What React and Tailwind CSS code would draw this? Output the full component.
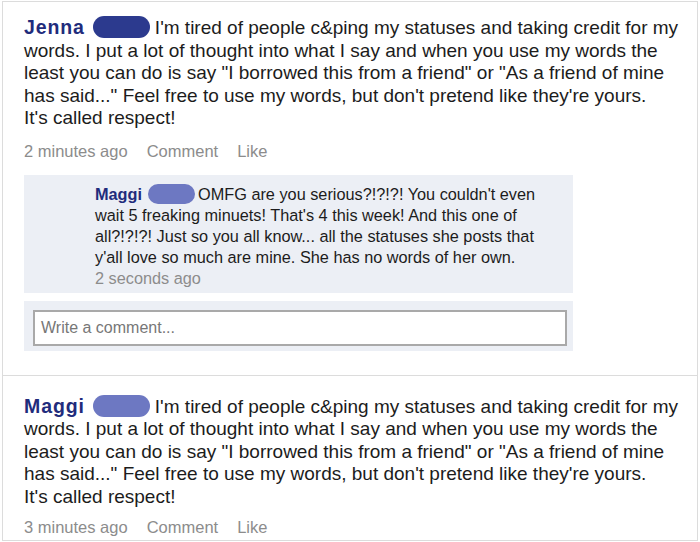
const FONT = { fontFamily: '"Liberation Sans", Arial, sans-serif' };

const STATUS =
  "I'm tired of people c&ping my statuses and taking credit for my words. I put a lot of thought into what I say and when you use my words the least you can do is say \"I borrowed this from a friend\" or \"As a friend of mine has said...\" Feel free to use my words, but don't pretend like they're yours.";

function Blob({ dark, small }) {
  return (
    <span
      className={
        "inline-block align-[-4px] rounded-full " +
        (small ? "w-[47px] h-[20px] " : "w-[57px] h-[22px] ") +
        (dark ? "bg-[#2c3a8e]" : "bg-[#6d78c2]")
      }
    />
  );
}

function Status({ name, dark }) {
  return (
    <p className="text-[19px] leading-[22.5px] text-[#1c1c1c] w-[666px]">
      <b className="text-[#1f2c7c] font-bold text-[19.5px] tracking-[0.9px] mr-[8px]">{name}</b>
      <Blob dark={dark} />
      <span className="ml-[5px]">{STATUS}</span>
      <br />
      It's called respect!
    </p>
  );
}

function Meta({ time, className }) {
  return (
    <div className={"flex gap-[19px] text-[16.5px] leading-[20px] text-[#8c8c8c] " + className}>
      <span>{time}</span>
      <span>Comment</span>
      <span>Like</span>
    </div>
  );
}

export default function App() {
  return (
    <div style={FONT} className="w-[700px] h-[542px] bg-white pt-[1px] px-[2px]">
      <div className="border border-[#dcdcdc] bg-white">
        <div className="pl-[21px] pt-[14px] pb-[24px] border-b border-[#dcdcdc]">
          <Status name="Jenna" dark />
          <Meta time="2 minutes ago" className="mt-[11px]" />
          <div className="w-[549px] mt-[14px]">
            <div className="bg-[#eceff5] pl-[71px] pr-[20px] pt-[9px] pb-[4px] text-[16.3px] leading-[21px] text-[#1c1c1c]">
              <b className="text-[#1f2c7c] font-bold mr-[6px]">Maggi</b>
              <Blob small />
              <span className="ml-[3px]">
                OMFG are you serious?!?!?! You couldn't even wait 5 freaking minuets! That's 4 this
                week! And this one of all?!?!?! Just so you all know... all the statuses she posts
                that y'all love so much are mine. She has no words of her own.
              </span>
              <div className="text-[#8c8c8c]">2 seconds ago</div>
            </div>
            <div className="bg-[#eceff5] mt-[8px] pl-[9px] pr-[6px] pt-[9px] pb-[5px]">
              <div className="h-[36px] bg-white border-2 border-[#a9a9a9] flex items-center pl-[6px] text-[16px] text-[#777]">
                Write a comment...
              </div>
            </div>
          </div>
        </div>
        <div className="pl-[21px] pt-[19px] pb-[3px]">
          <Status name="Maggi" />
          <Meta time="3 minutes ago" className="mt-[9px]" />
        </div>
      </div>
    </div>
  );
}
